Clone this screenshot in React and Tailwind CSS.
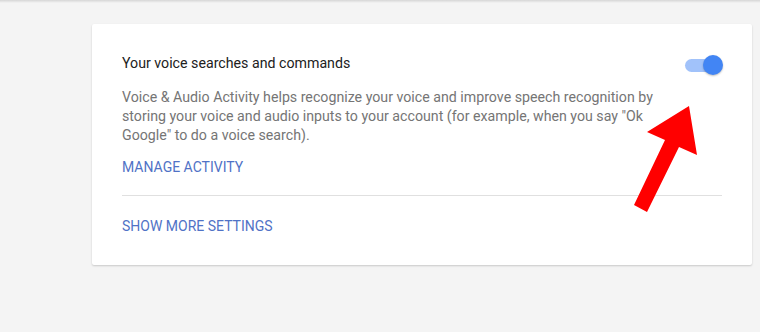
export default function App() {
  return (
    <div
      className="relative w-[760px] h-[332px] overflow-hidden bg-[#f4f4f4]"
      style={{ fontFamily: "Roboto, 'Liberation Sans', sans-serif" }}
    >
      {/* header shadow */}
      <div className="h-[3px] bg-gradient-to-b from-[#d6d6d6] to-[#f4f4f4]" />

      <div className="ml-[92px] mt-[21px] w-[660px] bg-white rounded-[2px] shadow-[0_1px_2px_rgba(0,0,0,0.18)] px-[30px] pt-[29px] pb-[29px]">
        <div className="flex items-start justify-between">
          <div className="text-[14.2px] leading-[20px] text-[#212121]">
            Your voice searches and commands
          </div>
          {/* toggle */}
          <div className="relative mr-[-1px] mt-[2px] w-[38px] h-[20px] flex items-center">
            <div className="absolute left-0 w-[34px] h-[13px] rounded-full bg-[#a1c2fa]" />
            <div className="absolute right-0 w-[20px] h-[20px] rounded-full bg-[#4285f4] shadow-[0_1px_2px_rgba(0,0,0,0.25)]" />
          </div>
        </div>

        <p className="mt-[13px] max-w-[550px] text-[14.2px] leading-[19px] text-[#757575]">
          Voice &amp; Audio Activity helps recognize your voice and improve speech recognition by
          storing your voice and audio inputs to your account (for example, when you say "Ok
          Google" to do a voice search).
        </p>

        <div className="mt-[12px] text-[14px] leading-[20px] text-[#5072c6] uppercase">
          Manage activity
        </div>

        <div className="mt-[18px] h-px bg-[#e0e0e0]" />

        <div className="mt-[20px] text-[14px] leading-[20px] text-[#5072c6] uppercase">
          Show more settings
        </div>
      </div>

      {/* red arrow annotation */}
      <svg
        className="absolute left-0 top-0"
        width="760"
        height="332"
        viewBox="0 0 760 332"
      >
        <polygon
          points="689,106 697,155 679,147 647,212 634,205 665,140 647,132"
          fill="#ff0000"
        />
      </svg>
    </div>
  );
}
